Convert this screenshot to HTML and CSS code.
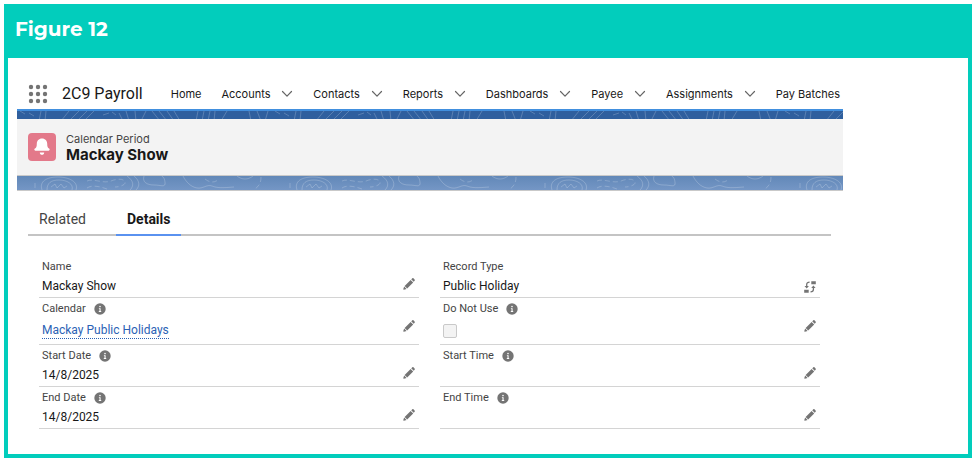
FILE: index.html
```
<!DOCTYPE html>
<html lang="en">
<head>
  <meta charset="UTF-8">
  <title>Mackay Show | Calendar Period</title>
  <meta name="viewport" content="width=device-width, initial-scale=1.0">
  <link rel="stylesheet" href="styles.css">
</head>
<body>

  <!-- shared icons -->
  <svg class="sprite" aria-hidden="true">
    <symbol id="chevron" viewBox="0 0 12 8">
      <path d="M1.500 1.500 6 6.200l4.500-4.700" fill="none" stroke="currentColor" stroke-width="1.200" stroke-linecap="round" stroke-linejoin="round"/>
    </symbol>
    <symbol id="pencil" viewBox="0 0 12 12">
      <path d="M7.600 1.900 10.200 4.500 4.200 10.500 1.600 7.900z"/>
      <path d="M8.200 1.300 9.200.4c.4-.4 1-.4 1.400 0l1 1c.4.400.4 1 0 1.400l-.9 1z"/>
      <path d="M1.200 8.500 3.600 10.900 .9 11.700c-.4.100-.7-.2-.6-.6z"/>
    </symbol>
    <symbol id="info" viewBox="0 0 12 12">
      <circle cx="6" cy="6" r="5.700"/>
      <circle cx="6" cy="3.600" r=".8" fill="#fff"/>
      <path d="M4.900 5.200h1.700v2.900h.6v.8H4.800v-.8h.7V6h-.6z" fill="#fff"/>
    </symbol>
    <symbol id="switch" viewBox="0 0 12 12">
      <path d="M7.300.2h4.500v3H7.300zM.2 8.800h4.500v3H.2z"/>
      <path d="M5.600 1.200C3.700 1.200 2.700 2 2.700 3.500v2M6.500 10.800c1.900 0 2.900-.8 2.900-2.300v-2" fill="none" stroke="currentColor" stroke-width="1.300"/>
      <path d="M.5 5h4.400L2.700 7.600zM7.200 7h4.400L9.400 4.400z"/>
    </symbol>
  </svg>

  <main class="figure">
    <h1 class="figure-title">Figure 12</h1>

    <div class="app">
      <nav class="nav">
        <button class="launcher" type="button" aria-label="App Launcher">
          <svg width="18" height="18" viewBox="0 0 18 18">
            <circle cx="2" cy="2" r="2.200"/><circle cx="9" cy="2" r="2.200"/><circle cx="16" cy="2" r="2.200"/>
            <circle cx="2" cy="9" r="2.200"/><circle cx="9" cy="9" r="2.200"/><circle cx="16" cy="9" r="2.200"/>
            <circle cx="2" cy="16" r="2.200"/><circle cx="9" cy="16" r="2.200"/><circle cx="16" cy="16" r="2.200"/>
          </svg>
        </button>
        <span class="app-name">2C9 Payroll</span>
        <ul class="menu">
          <li><a href="#">Home</a></li>
          <li><a href="#">Accounts</a><button type="button" aria-label="Accounts list"><svg class="chevron"><use href="#chevron"/></svg></button></li>
          <li><a href="#">Contacts</a><button type="button" aria-label="Contacts list"><svg class="chevron"><use href="#chevron"/></svg></button></li>
          <li><a href="#">Reports</a><button type="button" aria-label="Reports list"><svg class="chevron"><use href="#chevron"/></svg></button></li>
          <li><a href="#">Dashboards</a><button type="button" aria-label="Dashboards list"><svg class="chevron"><use href="#chevron"/></svg></button></li>
          <li><a href="#">Payee</a><button type="button" aria-label="Payee list"><svg class="chevron"><use href="#chevron"/></svg></button></li>
          <li><a href="#">Assignments</a><button type="button" aria-label="Assignments list"><svg class="chevron"><use href="#chevron"/></svg></button></li>
          <li><a href="#">Pay Batches</a></li>
        </ul>
      </nav>

      <svg class="band band-top" aria-hidden="true">
        <defs>
          <pattern id="topoTop" width="255" height="10" patternUnits="userSpaceOnUse">
            <path d="M3 0 8 3M12 2l5 3M24 0l-2 10M29 0l-1 10M44 10l8-10M52 10l10-10M60 10 70 0M67 10 77 0M86 4l6-2M95 1l4 3M102 2l4 8M109 0l3 10M118 0l1 10M124 10l5-10M135 0l8 10M142 0l8 10M150 0l7 10M157 0l6 10M179 10l2-10M185 10l2-10M191 10l2-10M197 10l1-10M204 10l6-10M232 0l2 10M240 0l4 10M248 10l3-10"/>
          </pattern>
        </defs>
        <rect width="100%" height="100%" fill="url(#topoTop)"/>
      </svg>

      <header class="record-header">
        <svg class="record-icon" viewBox="0 0 28 28" aria-hidden="true">
          <path d="M14 5.500c3.200 0 5.200 2.300 5.200 5.300 0 3 .6 4 1.900 4.800.9.600.7 2.100-.4 2.100H7.300c-1.100 0-1.300-1.500-.4-2.100 1.300-.8 1.900-1.800 1.900-4.800 0-3 2-5.300 5.200-5.300z"/>
          <path d="M11.800 19.500h4.400c0 1.500-1 2.300-2.200 2.300s-2.200-.8-2.200-2.300z"/>
        </svg>
        <div>
          <p class="record-type">Calendar Period</p>
          <h2 class="record-name">Mackay Show</h2>
        </div>
      </header>

      <svg class="band band-bottom" aria-hidden="true">
        <defs>
          <pattern id="topoBottom" width="255" height="14" patternUnits="userSpaceOnUse">
            <path d="M25 14C22 5 30 1 41 1s21 5 18 13M30 14c0-7 4-10 12-10s15 4 13 10M34 11l4-3 2 4 4-4 3 4 3-2"/>
            <path d="M70 5c6-3 16 3 24 0s13-2 14 1-6 5-10 5M70 12c4-3 12-2 20 1M18 12V4" stroke-dasharray="5 3"/>
            <path d="M110 0c7 5 7 10 3 14M117 0c6 5 6 10 2 14M127 0c-2 6 3 9 10 9s12 3 11-3-2-4-3-6M166 0c3 6 8 11 14 12s10-4 15-2 10 2 22 1"/>
            <path d="M188 3c5 4 10 4 14 0M244 1c0 6-2 9-6 12" stroke-dasharray="5 3"/>
            <path d="M220 0c5 4 11 4 16 0"/>
          </pattern>
        </defs>
        <rect width="100%" height="100%" fill="url(#topoBottom)"/>
      </svg>

      <div class="tabs" role="tablist">
        <button class="tab" type="button" role="tab" aria-selected="false">Related</button>
        <button class="tab active" type="button" role="tab" aria-selected="true">Details</button>
      </div>

      <div class="details">
        <div class="field">
          <span class="label">Name</span>
          <span class="value">Mackay Show</span>
          <button class="edit" type="button" aria-label="Edit Name"><svg><use href="#pencil"/></svg></button>
        </div>
        <div class="field">
          <span class="label">Record Type</span>
          <span class="value">Public Holiday</span>
          <button class="edit change" type="button" aria-label="Change Record Type"><svg><use href="#switch"/></svg></button>
        </div>

        <div class="field tall">
          <span class="label">Calendar <svg class="info"><use href="#info"/></svg></span>
          <span class="value"><a href="#">Mackay Public Holidays</a></span>
          <button class="edit" type="button" aria-label="Edit Calendar"><svg><use href="#pencil"/></svg></button>
        </div>
        <div class="field tall">
          <label class="label" for="doNotUse">Do Not Use <svg class="info"><use href="#info"/></svg></label>
          <span class="value"><input type="checkbox" id="doNotUse" disabled></span>
          <button class="edit" type="button" aria-label="Edit Do Not Use"><svg><use href="#pencil"/></svg></button>
        </div>

        <div class="field">
          <span class="label">Start Date <svg class="info"><use href="#info"/></svg></span>
          <span class="value">14/8/2025</span>
          <button class="edit" type="button" aria-label="Edit Start Date"><svg><use href="#pencil"/></svg></button>
        </div>
        <div class="field">
          <span class="label">Start Time <svg class="info"><use href="#info"/></svg></span>
          <span class="value"></span>
          <button class="edit" type="button" aria-label="Edit Start Time"><svg><use href="#pencil"/></svg></button>
        </div>

        <div class="field">
          <span class="label">End Date <svg class="info"><use href="#info"/></svg></span>
          <span class="value">14/8/2025</span>
          <button class="edit" type="button" aria-label="Edit End Date"><svg><use href="#pencil"/></svg></button>
        </div>
        <div class="field">
          <span class="label">End Time <svg class="info"><use href="#info"/></svg></span>
          <span class="value"></span>
          <button class="edit" type="button" aria-label="Edit End Time"><svg><use href="#pencil"/></svg></button>
        </div>
      </div>
    </div>
  </main>

</body>
</html>
```

FILE: styles.css
```
* {
  box-sizing: border-box;
}

body {
  margin: 0;
  padding: 4px;
  background: #fff;
  color: #181818;
  font-family: Roboto, sans-serif;
  font-size: 12px;
}

h1, h2, p, ul {
  margin: 0;
  padding: 0;
}

button {
  padding: 0;
  border: none;
  background: none;
  font: inherit;
  color: inherit;
  cursor: pointer;
}

a {
  color: inherit;
  text-decoration: none;
}

svg {
  display: block;
  fill: currentColor;
}

.sprite {
  display: none;
}

.figure {
  border: 4px solid #02cdbc;
  padding-bottom: 25px;
}

.figure-title {
  padding: 8px 7px 16px;
  background: #02cdbc;
  color: #fff;
  font-family: Montserrat, Inter, sans-serif;
  font-size: 20px;
  font-weight: 700;
  line-height: 26px;
}

.app {
  max-width: 826px;
  margin: 20px 9px 0;
}

/* navigation */
.nav {
  display: flex;
  align-items: center;
  height: 31px;
  padding: 0 3px 0 12px;
}

.launcher {
  color: #747474;
}

.launcher svg {
  overflow: visible;
}

.app-name {
  margin-left: 15px;
  font-size: 16px;
  white-space: nowrap;
}

.menu {
  display: flex;
  flex: 1;
  justify-content: space-between;
  margin-left: 28px;
  list-style: none;
  font-family: Inter, sans-serif;
  font-size: 11px;
  white-space: nowrap;
}

.menu li {
  display: flex;
  align-items: center;
  gap: 11px;
}

.chevron {
  width: 12px;
  height: 8px;
  color: #666;
}

/* patterned bands */
.band {
  width: 100%;
}

.band path {
  fill: none;
  stroke: #fff;
  stroke-width: 1;
  stroke-opacity: 0.2;
}

.band-top {
  height: 10px;
  border-top: 2px solid #418fde;
  background: #2f5f9e;
}

.band-bottom {
  height: 15px;
  border-bottom: 1px solid #c9c9c9;
  background: linear-gradient(#6288b8, #7496c5);
}

/* record header */
.record-header {
  display: flex;
  align-items: center;
  gap: 10px;
  height: 57px;
  padding: 0 11px;
  border-bottom: 1px solid #c9c9c9;
  background: #f3f3f3;
  font-family: Inter, sans-serif;
}

.record-icon {
  width: 28px;
  height: 28px;
  border-radius: 4px;
  background: #e3798a;
  color: #fff;
}

.record-type {
  color: #444;
  font-size: 11px;
  line-height: 14px;
}

.record-name {
  font-size: 15px;
  font-weight: 700;
  line-height: 17px;
}

/* tabs */
.tabs {
  display: flex;
  margin: 13px 12px 0 11px;
  border-bottom: 2px solid #c4c4c4;
  font-size: 14px;
}

.tab {
  height: 32px;
  margin-bottom: -2px;
  padding: 0 11px;
  border-bottom: 2px solid transparent;
  color: #444;
}

.tab + .tab {
  margin-left: 19px;
}

.tab.active {
  border-bottom-color: #5a92f0;
  color: #181818;
  font-weight: 700;
}

/* record fields */
.details {
  display: grid;
  grid-template-columns: 1fr 1fr;
  column-gap: 21px;
  margin: 20px 23px 0 22px;
}

.field {
  position: relative;
  height: 42px;
  padding: 3px 3px 0;
  border-bottom: 1px solid #d4d4d4;
}

.field.tall {
  height: 47px;
}

.label {
  display: flex;
  align-items: center;
  gap: 8px;
  color: #444;
  font-size: 11px;
  line-height: 16px;
}

.info {
  width: 12px;
  height: 12px;
  color: #747474;
}

.value {
  display: flex;
  align-items: center;
  height: 22px;
  line-height: 16px;
}

.tall .value {
  height: 26px;
}

.value a {
  border-bottom: 1px dotted #2b62b5;
  color: #2b62b5;
}

.value input {
  appearance: none;
  width: 14px;
  height: 14px;
  margin: 1px 0 0;
  border: 1px solid #c9c9c9;
  border-radius: 2px;
  background: #f3f3f3;
}

.edit {
  position: absolute;
  right: 4px;
  bottom: 7px;
  color: #747474;
}

.tall .edit {
  bottom: 12px;
}

.edit.change {
  bottom: 4px;
}

.edit svg {
  width: 12px;
  height: 12px;
}
```
